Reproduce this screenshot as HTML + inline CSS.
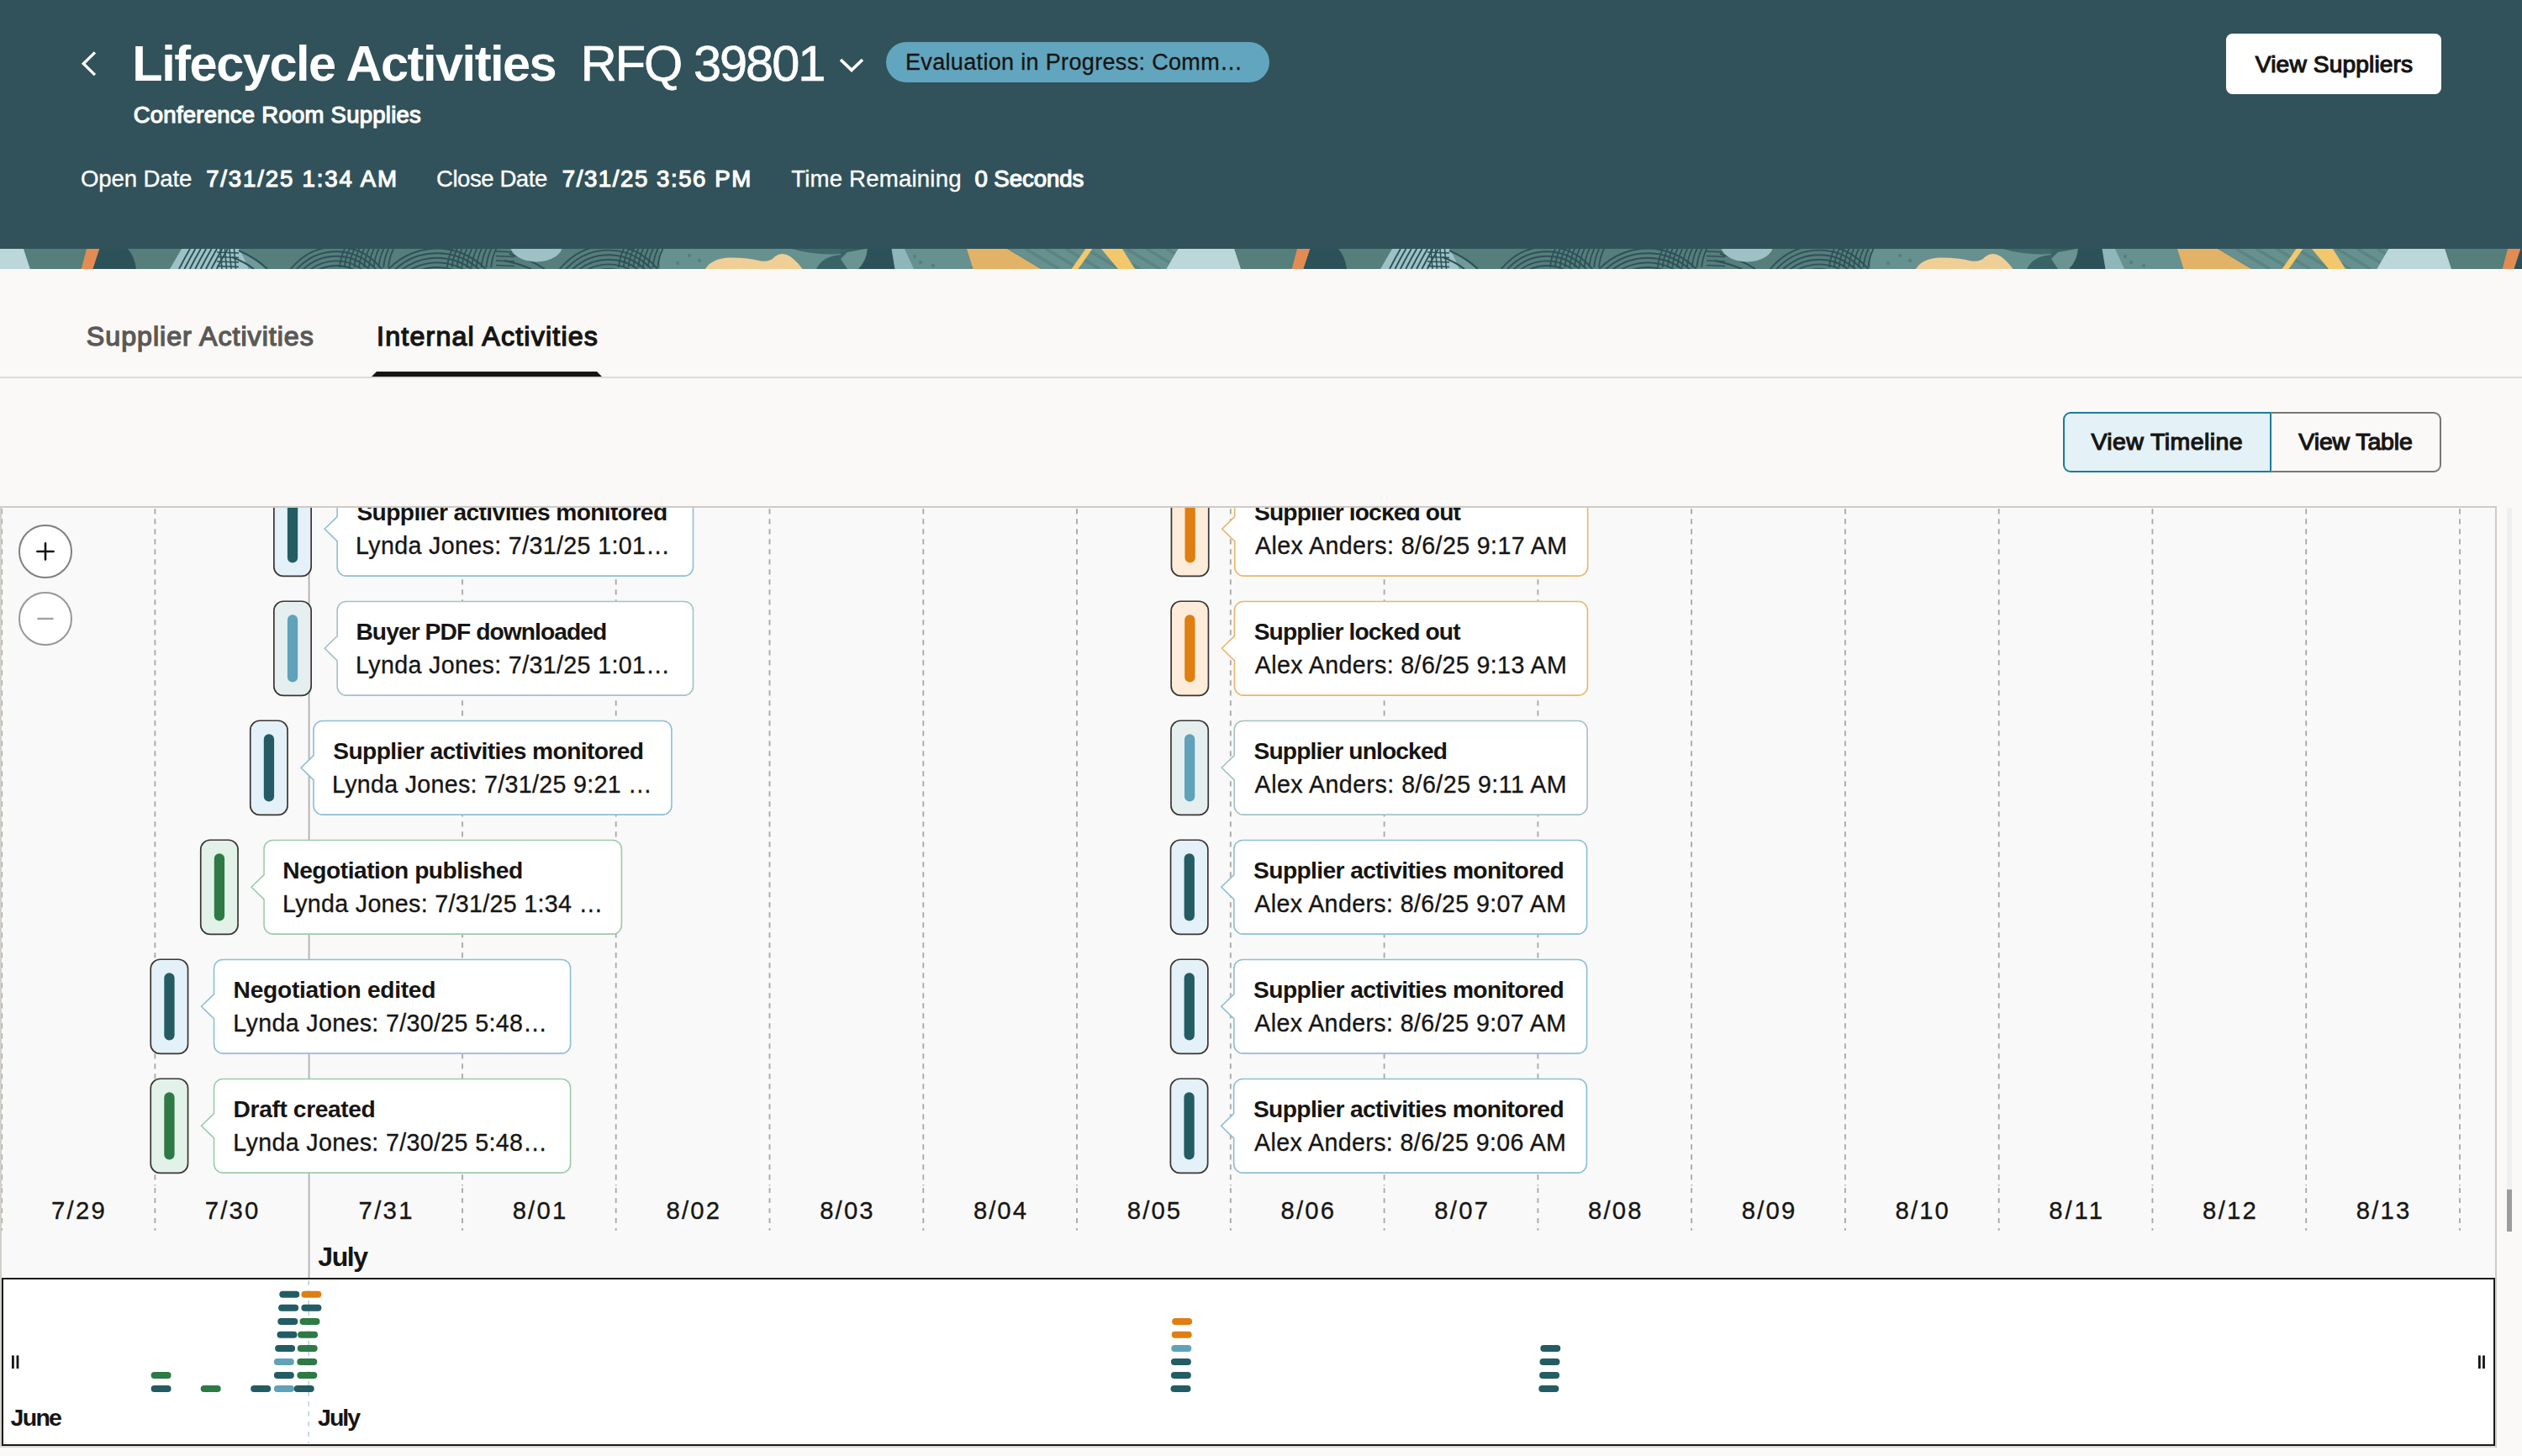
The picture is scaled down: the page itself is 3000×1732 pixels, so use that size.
<!DOCTYPE html>
<html lang="en"><head><meta charset="utf-8"><title>Lifecycle Activities</title>
<style>
html,body{margin:0;padding:0;}
body{width:3000px;height:1732px;overflow:hidden;background:#faf9f7;font-family:"Liberation Sans", sans-serif;}
#page{position:relative;width:3000px;height:1732px;overflow:hidden;background:#faf9f7;}
.t{position:absolute;white-space:nowrap;font-family:"Liberation Sans", sans-serif;}
.abs{position:absolute;}
#hdr{position:absolute;left:0;top:0;width:3000px;height:296px;background:#31525a;}
#strip{position:absolute;left:0;top:296px;width:3000px;height:24px;overflow:hidden;}
#tl{position:absolute;left:0;top:602px;width:2970px;height:1120px;background:#f9f9f9;overflow:hidden;}
</style></head><body><div id="page">

<header><div id="hdr"></div>
<svg class="abs" style="left:90px;top:56.4px" width="32" height="40" viewBox="0 0 32 40"><path d="M22.92 6.42 L9.25 19.8 L22.92 33.18" fill="none" stroke="#fff" stroke-width="3.3" stroke-linecap="butt" stroke-linejoin="miter"/></svg>
<span class="t" style="left:157.33px;top:46.03px;font-size:59.5px;line-height:59.5px;font-weight:700;color:#fff;letter-spacing:-1.483px;">Lifecycle Activities</span>
<span class="t" style="left:690.77px;top:46.03px;font-size:59.5px;line-height:59.5px;color:#fff;letter-spacing:-2.004px;-webkit-text-stroke:0.65px #fff;">RFQ 39801</span>
<svg class="abs" style="left:994px;top:64px" width="38" height="28" viewBox="0 0 38 28"><path d="M6 7.0 L19 19.4 L32 7.0" fill="none" stroke="#fff" stroke-width="3.6"/></svg>
<div class="abs" style="left:1054px;top:50px;width:456px;height:47.5px;border-radius:24px;background:#62a5be;"></div>
<span class="t" style="left:1076.99px;top:60.84px;font-size:27px;line-height:27px;color:#161513;letter-spacing:0.335px;-webkit-text-stroke:0.30px #161513;">Evaluation in Progress: Comm…</span>
<span class="t" style="left:158.70px;top:122.82px;font-size:27.5px;line-height:27.5px;color:#fff;letter-spacing:0.255px;-webkit-text-stroke:1.16px #fff;">Conference Room Supplies</span>
<span class="t" style="left:95.91px;top:198.74px;font-size:27.6px;line-height:27.6px;color:#fff;letter-spacing:-0.125px;-webkit-text-stroke:0.30px #fff;">Open Date</span>
<span class="t" style="left:245.20px;top:198.74px;font-size:27.6px;line-height:27.6px;color:#fff;letter-spacing:1.836px;-webkit-text-stroke:1.16px #fff;">7/31/25 1:34 AM</span>
<span class="t" style="left:518.97px;top:198.74px;font-size:27.6px;line-height:27.6px;color:#fff;letter-spacing:-0.467px;-webkit-text-stroke:0.30px #fff;">Close Date</span>
<span class="t" style="left:668.80px;top:198.74px;font-size:27.6px;line-height:27.6px;color:#fff;letter-spacing:1.563px;-webkit-text-stroke:1.16px #fff;">7/31/25 3:56 PM</span>
<span class="t" style="left:941.20px;top:198.74px;font-size:27.6px;line-height:27.6px;color:#fff;letter-spacing:0.191px;-webkit-text-stroke:0.30px #fff;">Time Remaining</span>
<span class="t" style="left:1159.48px;top:198.74px;font-size:27.6px;line-height:27.6px;color:#fff;letter-spacing:-0.062px;-webkit-text-stroke:1.16px #fff;">0 Seconds</span>
<div class="abs" style="left:2648px;top:40px;width:256px;height:72px;border-radius:7.5px;background:#fff;"></div>
<span class="t" style="left:2682.85px;top:61.83px;font-size:28.2px;line-height:28.2px;color:#161513;letter-spacing:0.105px;-webkit-text-stroke:1.18px #161513;">View Suppliers</span>
<div id="strip" aria-hidden="true"><svg width="3000" height="24" viewBox="0 0 3000 24" style="display:block"><rect width="3000" height="24" fill="#567e7b"/><g transform="translate(0,0)"><rect x="785" y="0" width="215" height="24" fill="#67918f"/><rect x="1000" y="0" width="30" height="24" fill="#6a9391"/><rect x="1070" y="0" width="330" height="24" fill="#67918f"/><path d="M1196 0 l40 24" stroke="#55807d" stroke-width="3.5" opacity=".7"/><path d="M1220 0 l40 24" stroke="#55807d" stroke-width="3.5" opacity=".7"/><path d="M1244 0 l40 24" stroke="#55807d" stroke-width="3.5" opacity=".7"/><path d="M1268 0 l40 24" stroke="#55807d" stroke-width="3.5" opacity=".7"/><path d="M1292 0 l40 24" stroke="#55807d" stroke-width="3.5" opacity=".7"/><path d="M1316 0 l40 24" stroke="#55807d" stroke-width="3.5" opacity=".7"/><path d="M1340 0 l40 24" stroke="#55807d" stroke-width="3.5" opacity=".7"/><path d="M1364 0 l40 24" stroke="#55807d" stroke-width="3.5" opacity=".7"/><path d="M1388 0 l40 24" stroke="#55807d" stroke-width="3.5" opacity=".7"/><circle cx="820" cy="8" r="2.2" fill="#55807d"/><circle cx="832" cy="14" r="2.2" fill="#55807d"/><circle cx="806" cy="17" r="2.2" fill="#55807d"/><circle cx="1095" cy="16" r="2.2" fill="#55807d"/><circle cx="1110" cy="20" r="2.2" fill="#55807d"/><circle cx="1088" cy="9" r="2.2" fill="#55807d"/><path d="M-38.5 0 L28 0 L35.8 24 L-52.4 24 Z" fill="#bcd7da"/><path d="M1401.5 0 L1468 0 L1475.8 24 L1387.6 24 Z" fill="#bcd7da"/><path d="M103 0 L118.4 0 L110.5 24 L96.7 24 Z" fill="#e28c54"/><path d="M110.5 24 L118.4 0 L152 0 Q160 9 162 24 Z" fill="#2d5158"/><path d="M216 0 L284 0 Q290 8 296 24 L202 24 Z" fill="#9dc1c4"/><path d="M284 0 Q300 10 316 24 L296 24 Q290 8 284 0 Z" fill="#6f9a99"/><path d="M226.0 0 Q219.0 12 213.0 24" stroke="#2d5158" stroke-width="1.9" fill="none"/><path d="M232.4 0 Q225.4 12 219.4 24" stroke="#2d5158" stroke-width="1.9" fill="none"/><path d="M238.8 0 Q231.8 12 225.8 24" stroke="#2d5158" stroke-width="1.9" fill="none"/><path d="M245.2 0 Q238.2 12 232.2 24" stroke="#2d5158" stroke-width="1.9" fill="none"/><path d="M251.6 0 Q244.6 12 238.6 24" stroke="#2d5158" stroke-width="1.9" fill="none"/><path d="M258.0 0 Q251.0 12 245.0 24" stroke="#2d5158" stroke-width="1.9" fill="none"/><path d="M264.4 0 Q257.4 12 251.39999999999998 24" stroke="#2d5158" stroke-width="1.9" fill="none"/><path d="M270.8 0 Q263.8 12 257.8 24" stroke="#2d5158" stroke-width="1.9" fill="none"/><path d="M262.0 0 L264.0 24" stroke="#2d5158" stroke-width="1.6" fill="none"/><path d="M267.5 0 L269.5 24" stroke="#2d5158" stroke-width="1.6" fill="none"/><path d="M273.0 0 L275.0 24" stroke="#2d5158" stroke-width="1.6" fill="none"/><path d="M278.5 0 L280.5 24" stroke="#2d5158" stroke-width="1.6" fill="none"/><path d="M258 4.0 L284 5.0" stroke="#2d5158" stroke-width="1.5" fill="none"/><path d="M258 9.5 L284 10.5" stroke="#2d5158" stroke-width="1.5" fill="none"/><path d="M258 15.0 L284 16.0" stroke="#2d5158" stroke-width="1.5" fill="none"/><path d="M258 20.5 L284 21.5" stroke="#2d5158" stroke-width="1.5" fill="none"/><path d="M284 2 Q306 12 318 24" stroke="#2d5158" stroke-width="2" fill="none"/><path d="M276 10 Q292 16 302 24" stroke="#2d5158" stroke-width="2" fill="none"/><circle cx="400" cy="66" r="46.0" stroke="#2d5158" stroke-width="1.9" fill="none"/><circle cx="400" cy="66" r="51.6" stroke="#2d5158" stroke-width="1.9" fill="none"/><circle cx="400" cy="66" r="57.2" stroke="#2d5158" stroke-width="1.9" fill="none"/><circle cx="400" cy="66" r="62.8" stroke="#2d5158" stroke-width="1.9" fill="none"/><circle cx="400" cy="66" r="68.4" stroke="#2d5158" stroke-width="1.9" fill="none"/><circle cx="520" cy="80" r="58.0" stroke="#2d5158" stroke-width="1.9" fill="none"/><circle cx="520" cy="80" r="63.6" stroke="#2d5158" stroke-width="1.9" fill="none"/><circle cx="520" cy="80" r="69.2" stroke="#2d5158" stroke-width="1.9" fill="none"/><circle cx="520" cy="80" r="74.8" stroke="#2d5158" stroke-width="1.9" fill="none"/><circle cx="520" cy="80" r="80.4" stroke="#2d5158" stroke-width="1.9" fill="none"/><circle cx="724" cy="70" r="46.0" stroke="#2d5158" stroke-width="1.9" fill="none"/><circle cx="724" cy="70" r="51.6" stroke="#2d5158" stroke-width="1.9" fill="none"/><circle cx="724" cy="70" r="57.2" stroke="#2d5158" stroke-width="1.9" fill="none"/><circle cx="724" cy="70" r="62.8" stroke="#2d5158" stroke-width="1.9" fill="none"/><circle cx="724" cy="70" r="68.4" stroke="#2d5158" stroke-width="1.9" fill="none"/><circle cx="724" cy="70" r="74.0" stroke="#2d5158" stroke-width="1.9" fill="none"/><path d="M410.0 0 Q405.0 10 404.0 22" stroke="#2d5158" stroke-width="1.8" fill="none"/><path d="M415.8 0 Q410.8 10 409.8 22" stroke="#2d5158" stroke-width="1.8" fill="none"/><path d="M421.6 0 Q416.6 10 415.6 22" stroke="#2d5158" stroke-width="1.8" fill="none"/><path d="M427.4 0 Q422.4 10 421.4 22" stroke="#2d5158" stroke-width="1.8" fill="none"/><path d="M433.2 0 Q428.2 10 427.2 22" stroke="#2d5158" stroke-width="1.8" fill="none"/><path d="M439.0 0 Q434.0 10 433.0 22" stroke="#2d5158" stroke-width="1.8" fill="none"/><path d="M444.8 0 Q439.8 10 438.8 22" stroke="#2d5158" stroke-width="1.8" fill="none"/><path d="M450.6 0 Q445.6 10 444.6 22" stroke="#2d5158" stroke-width="1.8" fill="none"/><path d="M456.4 0 Q451.4 10 450.4 22" stroke="#2d5158" stroke-width="1.8" fill="none"/><path d="M462.2 0 Q457.2 10 456.2 22" stroke="#2d5158" stroke-width="1.8" fill="none"/><path d="M468.0 0 Q463.0 10 462.0 22" stroke="#2d5158" stroke-width="1.8" fill="none"/><path d="M538.0 0 Q533.0 10 532.0 22" stroke="#2d5158" stroke-width="1.8" fill="none"/><path d="M543.8 0 Q538.8 10 537.8 22" stroke="#2d5158" stroke-width="1.8" fill="none"/><path d="M549.6 0 Q544.6 10 543.6 22" stroke="#2d5158" stroke-width="1.8" fill="none"/><path d="M555.4 0 Q550.4 10 549.4 22" stroke="#2d5158" stroke-width="1.8" fill="none"/><path d="M561.2 0 Q556.2 10 555.2 22" stroke="#2d5158" stroke-width="1.8" fill="none"/><path d="M567.0 0 Q562.0 10 561.0 22" stroke="#2d5158" stroke-width="1.8" fill="none"/><path d="M572.8 0 Q567.8 10 566.8 22" stroke="#2d5158" stroke-width="1.8" fill="none"/><path d="M578.6 0 Q573.6 10 572.6 22" stroke="#2d5158" stroke-width="1.8" fill="none"/><path d="M584.4 0 Q579.4 10 578.4 22" stroke="#2d5158" stroke-width="1.8" fill="none"/><path d="M590.2 0 Q585.2 10 584.2 22" stroke="#2d5158" stroke-width="1.8" fill="none"/><path d="M742.0 0 Q737.0 10 736.0 22" stroke="#2d5158" stroke-width="1.8" fill="none"/><path d="M747.8 0 Q742.8 10 741.8 22" stroke="#2d5158" stroke-width="1.8" fill="none"/><path d="M753.6 0 Q748.6 10 747.6 22" stroke="#2d5158" stroke-width="1.8" fill="none"/><path d="M759.4 0 Q754.4 10 753.4 22" stroke="#2d5158" stroke-width="1.8" fill="none"/><path d="M765.2 0 Q760.2 10 759.2 22" stroke="#2d5158" stroke-width="1.8" fill="none"/><path d="M771.0 0 Q766.0 10 765.0 22" stroke="#2d5158" stroke-width="1.8" fill="none"/><path d="M776.8 0 Q771.8 10 770.8 22" stroke="#2d5158" stroke-width="1.8" fill="none"/><path d="M782.6 0 Q777.6 10 776.6 22" stroke="#2d5158" stroke-width="1.8" fill="none"/><path d="M788.4 0 Q783.4 10 782.4 22" stroke="#2d5158" stroke-width="1.8" fill="none"/><path d="M590 3.0 L612 4.0" stroke="#2d5158" stroke-width="1.5" fill="none"/><path d="M590 8.5 L612 9.5" stroke="#2d5158" stroke-width="1.5" fill="none"/><path d="M590 14.0 L612 15.0" stroke="#2d5158" stroke-width="1.5" fill="none"/><path d="M590 19.5 L612 20.5" stroke="#2d5158" stroke-width="1.5" fill="none"/><path d="M606 6 Q630 12 648 24" stroke="#2d5158" stroke-width="2" fill="none"/><path d="M600 14 Q618 18 632 24" stroke="#2d5158" stroke-width="2" fill="none"/><ellipse cx="638" cy="-4" rx="31" ry="19.5" fill="#9dc1c4"/><path d="M942 0 L1000 0 L1000 6 Q970 8 942 0 Z" fill="#41696b"/><path d="M839 24 Q846 12 866 10.5 Q888 10 905 14.5 Q916 16 922 9 Q930 3 940 9 Q950 17 954.5 24 Z" fill="#f0cf97"/><path d="M971 24 Q978 9 1000 7 L1000 0 L1032 0 Q1030 14 1022 24 Z" fill="#3a6367"/><path d="M1000 12 L1008 4 L1030 0 L1032 0 Q1030 14 1022 24 L1008 24 Z" fill="#6a9391"/><path d="M1032 0 L1061 0 L1064.5 24 L1021 24 Q1031 14 1032 0 Z" fill="#2d5158"/><path d="M1060.5 0 L1076 0 L1087 24 L1064.5 24 Z" fill="#8fb6b8"/><path d="M1150 0 L1198 0 L1238 24 L1157.6 24 Z" fill="#e2b266"/><path d="M1291.4 0 L1299.4 0 L1282.5 24 L1274.6 24 Z" fill="#f3c86c"/><path d="M1310 0 L1335 0 L1350 24 L1330 24 Z" fill="#f3c86c"/></g><g transform="translate(1440,0)"><rect x="785" y="0" width="215" height="24" fill="#67918f"/><rect x="1000" y="0" width="30" height="24" fill="#6a9391"/><rect x="1070" y="0" width="330" height="24" fill="#67918f"/><path d="M1196 0 l40 24" stroke="#55807d" stroke-width="3.5" opacity=".7"/><path d="M1220 0 l40 24" stroke="#55807d" stroke-width="3.5" opacity=".7"/><path d="M1244 0 l40 24" stroke="#55807d" stroke-width="3.5" opacity=".7"/><path d="M1268 0 l40 24" stroke="#55807d" stroke-width="3.5" opacity=".7"/><path d="M1292 0 l40 24" stroke="#55807d" stroke-width="3.5" opacity=".7"/><path d="M1316 0 l40 24" stroke="#55807d" stroke-width="3.5" opacity=".7"/><path d="M1340 0 l40 24" stroke="#55807d" stroke-width="3.5" opacity=".7"/><path d="M1364 0 l40 24" stroke="#55807d" stroke-width="3.5" opacity=".7"/><path d="M1388 0 l40 24" stroke="#55807d" stroke-width="3.5" opacity=".7"/><circle cx="820" cy="8" r="2.2" fill="#55807d"/><circle cx="832" cy="14" r="2.2" fill="#55807d"/><circle cx="806" cy="17" r="2.2" fill="#55807d"/><circle cx="1095" cy="16" r="2.2" fill="#55807d"/><circle cx="1110" cy="20" r="2.2" fill="#55807d"/><circle cx="1088" cy="9" r="2.2" fill="#55807d"/><path d="M-38.5 0 L28 0 L35.8 24 L-52.4 24 Z" fill="#bcd7da"/><path d="M1401.5 0 L1468 0 L1475.8 24 L1387.6 24 Z" fill="#bcd7da"/><path d="M103 0 L118.4 0 L110.5 24 L96.7 24 Z" fill="#e28c54"/><path d="M110.5 24 L118.4 0 L152 0 Q160 9 162 24 Z" fill="#2d5158"/><path d="M216 0 L284 0 Q290 8 296 24 L202 24 Z" fill="#9dc1c4"/><path d="M284 0 Q300 10 316 24 L296 24 Q290 8 284 0 Z" fill="#6f9a99"/><path d="M226.0 0 Q219.0 12 213.0 24" stroke="#2d5158" stroke-width="1.9" fill="none"/><path d="M232.4 0 Q225.4 12 219.4 24" stroke="#2d5158" stroke-width="1.9" fill="none"/><path d="M238.8 0 Q231.8 12 225.8 24" stroke="#2d5158" stroke-width="1.9" fill="none"/><path d="M245.2 0 Q238.2 12 232.2 24" stroke="#2d5158" stroke-width="1.9" fill="none"/><path d="M251.6 0 Q244.6 12 238.6 24" stroke="#2d5158" stroke-width="1.9" fill="none"/><path d="M258.0 0 Q251.0 12 245.0 24" stroke="#2d5158" stroke-width="1.9" fill="none"/><path d="M264.4 0 Q257.4 12 251.39999999999998 24" stroke="#2d5158" stroke-width="1.9" fill="none"/><path d="M270.8 0 Q263.8 12 257.8 24" stroke="#2d5158" stroke-width="1.9" fill="none"/><path d="M262.0 0 L264.0 24" stroke="#2d5158" stroke-width="1.6" fill="none"/><path d="M267.5 0 L269.5 24" stroke="#2d5158" stroke-width="1.6" fill="none"/><path d="M273.0 0 L275.0 24" stroke="#2d5158" stroke-width="1.6" fill="none"/><path d="M278.5 0 L280.5 24" stroke="#2d5158" stroke-width="1.6" fill="none"/><path d="M258 4.0 L284 5.0" stroke="#2d5158" stroke-width="1.5" fill="none"/><path d="M258 9.5 L284 10.5" stroke="#2d5158" stroke-width="1.5" fill="none"/><path d="M258 15.0 L284 16.0" stroke="#2d5158" stroke-width="1.5" fill="none"/><path d="M258 20.5 L284 21.5" stroke="#2d5158" stroke-width="1.5" fill="none"/><path d="M284 2 Q306 12 318 24" stroke="#2d5158" stroke-width="2" fill="none"/><path d="M276 10 Q292 16 302 24" stroke="#2d5158" stroke-width="2" fill="none"/><circle cx="400" cy="66" r="46.0" stroke="#2d5158" stroke-width="1.9" fill="none"/><circle cx="400" cy="66" r="51.6" stroke="#2d5158" stroke-width="1.9" fill="none"/><circle cx="400" cy="66" r="57.2" stroke="#2d5158" stroke-width="1.9" fill="none"/><circle cx="400" cy="66" r="62.8" stroke="#2d5158" stroke-width="1.9" fill="none"/><circle cx="400" cy="66" r="68.4" stroke="#2d5158" stroke-width="1.9" fill="none"/><circle cx="520" cy="80" r="58.0" stroke="#2d5158" stroke-width="1.9" fill="none"/><circle cx="520" cy="80" r="63.6" stroke="#2d5158" stroke-width="1.9" fill="none"/><circle cx="520" cy="80" r="69.2" stroke="#2d5158" stroke-width="1.9" fill="none"/><circle cx="520" cy="80" r="74.8" stroke="#2d5158" stroke-width="1.9" fill="none"/><circle cx="520" cy="80" r="80.4" stroke="#2d5158" stroke-width="1.9" fill="none"/><circle cx="724" cy="70" r="46.0" stroke="#2d5158" stroke-width="1.9" fill="none"/><circle cx="724" cy="70" r="51.6" stroke="#2d5158" stroke-width="1.9" fill="none"/><circle cx="724" cy="70" r="57.2" stroke="#2d5158" stroke-width="1.9" fill="none"/><circle cx="724" cy="70" r="62.8" stroke="#2d5158" stroke-width="1.9" fill="none"/><circle cx="724" cy="70" r="68.4" stroke="#2d5158" stroke-width="1.9" fill="none"/><circle cx="724" cy="70" r="74.0" stroke="#2d5158" stroke-width="1.9" fill="none"/><path d="M410.0 0 Q405.0 10 404.0 22" stroke="#2d5158" stroke-width="1.8" fill="none"/><path d="M415.8 0 Q410.8 10 409.8 22" stroke="#2d5158" stroke-width="1.8" fill="none"/><path d="M421.6 0 Q416.6 10 415.6 22" stroke="#2d5158" stroke-width="1.8" fill="none"/><path d="M427.4 0 Q422.4 10 421.4 22" stroke="#2d5158" stroke-width="1.8" fill="none"/><path d="M433.2 0 Q428.2 10 427.2 22" stroke="#2d5158" stroke-width="1.8" fill="none"/><path d="M439.0 0 Q434.0 10 433.0 22" stroke="#2d5158" stroke-width="1.8" fill="none"/><path d="M444.8 0 Q439.8 10 438.8 22" stroke="#2d5158" stroke-width="1.8" fill="none"/><path d="M450.6 0 Q445.6 10 444.6 22" stroke="#2d5158" stroke-width="1.8" fill="none"/><path d="M456.4 0 Q451.4 10 450.4 22" stroke="#2d5158" stroke-width="1.8" fill="none"/><path d="M462.2 0 Q457.2 10 456.2 22" stroke="#2d5158" stroke-width="1.8" fill="none"/><path d="M468.0 0 Q463.0 10 462.0 22" stroke="#2d5158" stroke-width="1.8" fill="none"/><path d="M538.0 0 Q533.0 10 532.0 22" stroke="#2d5158" stroke-width="1.8" fill="none"/><path d="M543.8 0 Q538.8 10 537.8 22" stroke="#2d5158" stroke-width="1.8" fill="none"/><path d="M549.6 0 Q544.6 10 543.6 22" stroke="#2d5158" stroke-width="1.8" fill="none"/><path d="M555.4 0 Q550.4 10 549.4 22" stroke="#2d5158" stroke-width="1.8" fill="none"/><path d="M561.2 0 Q556.2 10 555.2 22" stroke="#2d5158" stroke-width="1.8" fill="none"/><path d="M567.0 0 Q562.0 10 561.0 22" stroke="#2d5158" stroke-width="1.8" fill="none"/><path d="M572.8 0 Q567.8 10 566.8 22" stroke="#2d5158" stroke-width="1.8" fill="none"/><path d="M578.6 0 Q573.6 10 572.6 22" stroke="#2d5158" stroke-width="1.8" fill="none"/><path d="M584.4 0 Q579.4 10 578.4 22" stroke="#2d5158" stroke-width="1.8" fill="none"/><path d="M590.2 0 Q585.2 10 584.2 22" stroke="#2d5158" stroke-width="1.8" fill="none"/><path d="M742.0 0 Q737.0 10 736.0 22" stroke="#2d5158" stroke-width="1.8" fill="none"/><path d="M747.8 0 Q742.8 10 741.8 22" stroke="#2d5158" stroke-width="1.8" fill="none"/><path d="M753.6 0 Q748.6 10 747.6 22" stroke="#2d5158" stroke-width="1.8" fill="none"/><path d="M759.4 0 Q754.4 10 753.4 22" stroke="#2d5158" stroke-width="1.8" fill="none"/><path d="M765.2 0 Q760.2 10 759.2 22" stroke="#2d5158" stroke-width="1.8" fill="none"/><path d="M771.0 0 Q766.0 10 765.0 22" stroke="#2d5158" stroke-width="1.8" fill="none"/><path d="M776.8 0 Q771.8 10 770.8 22" stroke="#2d5158" stroke-width="1.8" fill="none"/><path d="M782.6 0 Q777.6 10 776.6 22" stroke="#2d5158" stroke-width="1.8" fill="none"/><path d="M788.4 0 Q783.4 10 782.4 22" stroke="#2d5158" stroke-width="1.8" fill="none"/><path d="M590 3.0 L612 4.0" stroke="#2d5158" stroke-width="1.5" fill="none"/><path d="M590 8.5 L612 9.5" stroke="#2d5158" stroke-width="1.5" fill="none"/><path d="M590 14.0 L612 15.0" stroke="#2d5158" stroke-width="1.5" fill="none"/><path d="M590 19.5 L612 20.5" stroke="#2d5158" stroke-width="1.5" fill="none"/><path d="M606 6 Q630 12 648 24" stroke="#2d5158" stroke-width="2" fill="none"/><path d="M600 14 Q618 18 632 24" stroke="#2d5158" stroke-width="2" fill="none"/><ellipse cx="638" cy="-4" rx="31" ry="19.5" fill="#9dc1c4"/><path d="M942 0 L1000 0 L1000 6 Q970 8 942 0 Z" fill="#41696b"/><path d="M839 24 Q846 12 866 10.5 Q888 10 905 14.5 Q916 16 922 9 Q930 3 940 9 Q950 17 954.5 24 Z" fill="#f0cf97"/><path d="M971 24 Q978 9 1000 7 L1000 0 L1032 0 Q1030 14 1022 24 Z" fill="#3a6367"/><path d="M1000 12 L1008 4 L1030 0 L1032 0 Q1030 14 1022 24 L1008 24 Z" fill="#6a9391"/><path d="M1032 0 L1061 0 L1064.5 24 L1021 24 Q1031 14 1032 0 Z" fill="#2d5158"/><path d="M1060.5 0 L1076 0 L1087 24 L1064.5 24 Z" fill="#8fb6b8"/><path d="M1150 0 L1198 0 L1238 24 L1157.6 24 Z" fill="#e2b266"/><path d="M1291.4 0 L1299.4 0 L1282.5 24 L1274.6 24 Z" fill="#f3c86c"/><path d="M1310 0 L1335 0 L1350 24 L1330 24 Z" fill="#f3c86c"/></g><g transform="translate(2880,0)"><rect x="785" y="0" width="215" height="24" fill="#67918f"/><rect x="1000" y="0" width="30" height="24" fill="#6a9391"/><rect x="1070" y="0" width="330" height="24" fill="#67918f"/><path d="M1196 0 l40 24" stroke="#55807d" stroke-width="3.5" opacity=".7"/><path d="M1220 0 l40 24" stroke="#55807d" stroke-width="3.5" opacity=".7"/><path d="M1244 0 l40 24" stroke="#55807d" stroke-width="3.5" opacity=".7"/><path d="M1268 0 l40 24" stroke="#55807d" stroke-width="3.5" opacity=".7"/><path d="M1292 0 l40 24" stroke="#55807d" stroke-width="3.5" opacity=".7"/><path d="M1316 0 l40 24" stroke="#55807d" stroke-width="3.5" opacity=".7"/><path d="M1340 0 l40 24" stroke="#55807d" stroke-width="3.5" opacity=".7"/><path d="M1364 0 l40 24" stroke="#55807d" stroke-width="3.5" opacity=".7"/><path d="M1388 0 l40 24" stroke="#55807d" stroke-width="3.5" opacity=".7"/><circle cx="820" cy="8" r="2.2" fill="#55807d"/><circle cx="832" cy="14" r="2.2" fill="#55807d"/><circle cx="806" cy="17" r="2.2" fill="#55807d"/><circle cx="1095" cy="16" r="2.2" fill="#55807d"/><circle cx="1110" cy="20" r="2.2" fill="#55807d"/><circle cx="1088" cy="9" r="2.2" fill="#55807d"/><path d="M-38.5 0 L28 0 L35.8 24 L-52.4 24 Z" fill="#bcd7da"/><path d="M1401.5 0 L1468 0 L1475.8 24 L1387.6 24 Z" fill="#bcd7da"/><path d="M103 0 L118.4 0 L110.5 24 L96.7 24 Z" fill="#e28c54"/><path d="M110.5 24 L118.4 0 L152 0 Q160 9 162 24 Z" fill="#2d5158"/><path d="M216 0 L284 0 Q290 8 296 24 L202 24 Z" fill="#9dc1c4"/><path d="M284 0 Q300 10 316 24 L296 24 Q290 8 284 0 Z" fill="#6f9a99"/><path d="M226.0 0 Q219.0 12 213.0 24" stroke="#2d5158" stroke-width="1.9" fill="none"/><path d="M232.4 0 Q225.4 12 219.4 24" stroke="#2d5158" stroke-width="1.9" fill="none"/><path d="M238.8 0 Q231.8 12 225.8 24" stroke="#2d5158" stroke-width="1.9" fill="none"/><path d="M245.2 0 Q238.2 12 232.2 24" stroke="#2d5158" stroke-width="1.9" fill="none"/><path d="M251.6 0 Q244.6 12 238.6 24" stroke="#2d5158" stroke-width="1.9" fill="none"/><path d="M258.0 0 Q251.0 12 245.0 24" stroke="#2d5158" stroke-width="1.9" fill="none"/><path d="M264.4 0 Q257.4 12 251.39999999999998 24" stroke="#2d5158" stroke-width="1.9" fill="none"/><path d="M270.8 0 Q263.8 12 257.8 24" stroke="#2d5158" stroke-width="1.9" fill="none"/><path d="M262.0 0 L264.0 24" stroke="#2d5158" stroke-width="1.6" fill="none"/><path d="M267.5 0 L269.5 24" stroke="#2d5158" stroke-width="1.6" fill="none"/><path d="M273.0 0 L275.0 24" stroke="#2d5158" stroke-width="1.6" fill="none"/><path d="M278.5 0 L280.5 24" stroke="#2d5158" stroke-width="1.6" fill="none"/><path d="M258 4.0 L284 5.0" stroke="#2d5158" stroke-width="1.5" fill="none"/><path d="M258 9.5 L284 10.5" stroke="#2d5158" stroke-width="1.5" fill="none"/><path d="M258 15.0 L284 16.0" stroke="#2d5158" stroke-width="1.5" fill="none"/><path d="M258 20.5 L284 21.5" stroke="#2d5158" stroke-width="1.5" fill="none"/><path d="M284 2 Q306 12 318 24" stroke="#2d5158" stroke-width="2" fill="none"/><path d="M276 10 Q292 16 302 24" stroke="#2d5158" stroke-width="2" fill="none"/><circle cx="400" cy="66" r="46.0" stroke="#2d5158" stroke-width="1.9" fill="none"/><circle cx="400" cy="66" r="51.6" stroke="#2d5158" stroke-width="1.9" fill="none"/><circle cx="400" cy="66" r="57.2" stroke="#2d5158" stroke-width="1.9" fill="none"/><circle cx="400" cy="66" r="62.8" stroke="#2d5158" stroke-width="1.9" fill="none"/><circle cx="400" cy="66" r="68.4" stroke="#2d5158" stroke-width="1.9" fill="none"/><circle cx="520" cy="80" r="58.0" stroke="#2d5158" stroke-width="1.9" fill="none"/><circle cx="520" cy="80" r="63.6" stroke="#2d5158" stroke-width="1.9" fill="none"/><circle cx="520" cy="80" r="69.2" stroke="#2d5158" stroke-width="1.9" fill="none"/><circle cx="520" cy="80" r="74.8" stroke="#2d5158" stroke-width="1.9" fill="none"/><circle cx="520" cy="80" r="80.4" stroke="#2d5158" stroke-width="1.9" fill="none"/><circle cx="724" cy="70" r="46.0" stroke="#2d5158" stroke-width="1.9" fill="none"/><circle cx="724" cy="70" r="51.6" stroke="#2d5158" stroke-width="1.9" fill="none"/><circle cx="724" cy="70" r="57.2" stroke="#2d5158" stroke-width="1.9" fill="none"/><circle cx="724" cy="70" r="62.8" stroke="#2d5158" stroke-width="1.9" fill="none"/><circle cx="724" cy="70" r="68.4" stroke="#2d5158" stroke-width="1.9" fill="none"/><circle cx="724" cy="70" r="74.0" stroke="#2d5158" stroke-width="1.9" fill="none"/><path d="M410.0 0 Q405.0 10 404.0 22" stroke="#2d5158" stroke-width="1.8" fill="none"/><path d="M415.8 0 Q410.8 10 409.8 22" stroke="#2d5158" stroke-width="1.8" fill="none"/><path d="M421.6 0 Q416.6 10 415.6 22" stroke="#2d5158" stroke-width="1.8" fill="none"/><path d="M427.4 0 Q422.4 10 421.4 22" stroke="#2d5158" stroke-width="1.8" fill="none"/><path d="M433.2 0 Q428.2 10 427.2 22" stroke="#2d5158" stroke-width="1.8" fill="none"/><path d="M439.0 0 Q434.0 10 433.0 22" stroke="#2d5158" stroke-width="1.8" fill="none"/><path d="M444.8 0 Q439.8 10 438.8 22" stroke="#2d5158" stroke-width="1.8" fill="none"/><path d="M450.6 0 Q445.6 10 444.6 22" stroke="#2d5158" stroke-width="1.8" fill="none"/><path d="M456.4 0 Q451.4 10 450.4 22" stroke="#2d5158" stroke-width="1.8" fill="none"/><path d="M462.2 0 Q457.2 10 456.2 22" stroke="#2d5158" stroke-width="1.8" fill="none"/><path d="M468.0 0 Q463.0 10 462.0 22" stroke="#2d5158" stroke-width="1.8" fill="none"/><path d="M538.0 0 Q533.0 10 532.0 22" stroke="#2d5158" stroke-width="1.8" fill="none"/><path d="M543.8 0 Q538.8 10 537.8 22" stroke="#2d5158" stroke-width="1.8" fill="none"/><path d="M549.6 0 Q544.6 10 543.6 22" stroke="#2d5158" stroke-width="1.8" fill="none"/><path d="M555.4 0 Q550.4 10 549.4 22" stroke="#2d5158" stroke-width="1.8" fill="none"/><path d="M561.2 0 Q556.2 10 555.2 22" stroke="#2d5158" stroke-width="1.8" fill="none"/><path d="M567.0 0 Q562.0 10 561.0 22" stroke="#2d5158" stroke-width="1.8" fill="none"/><path d="M572.8 0 Q567.8 10 566.8 22" stroke="#2d5158" stroke-width="1.8" fill="none"/><path d="M578.6 0 Q573.6 10 572.6 22" stroke="#2d5158" stroke-width="1.8" fill="none"/><path d="M584.4 0 Q579.4 10 578.4 22" stroke="#2d5158" stroke-width="1.8" fill="none"/><path d="M590.2 0 Q585.2 10 584.2 22" stroke="#2d5158" stroke-width="1.8" fill="none"/><path d="M742.0 0 Q737.0 10 736.0 22" stroke="#2d5158" stroke-width="1.8" fill="none"/><path d="M747.8 0 Q742.8 10 741.8 22" stroke="#2d5158" stroke-width="1.8" fill="none"/><path d="M753.6 0 Q748.6 10 747.6 22" stroke="#2d5158" stroke-width="1.8" fill="none"/><path d="M759.4 0 Q754.4 10 753.4 22" stroke="#2d5158" stroke-width="1.8" fill="none"/><path d="M765.2 0 Q760.2 10 759.2 22" stroke="#2d5158" stroke-width="1.8" fill="none"/><path d="M771.0 0 Q766.0 10 765.0 22" stroke="#2d5158" stroke-width="1.8" fill="none"/><path d="M776.8 0 Q771.8 10 770.8 22" stroke="#2d5158" stroke-width="1.8" fill="none"/><path d="M782.6 0 Q777.6 10 776.6 22" stroke="#2d5158" stroke-width="1.8" fill="none"/><path d="M788.4 0 Q783.4 10 782.4 22" stroke="#2d5158" stroke-width="1.8" fill="none"/><path d="M590 3.0 L612 4.0" stroke="#2d5158" stroke-width="1.5" fill="none"/><path d="M590 8.5 L612 9.5" stroke="#2d5158" stroke-width="1.5" fill="none"/><path d="M590 14.0 L612 15.0" stroke="#2d5158" stroke-width="1.5" fill="none"/><path d="M590 19.5 L612 20.5" stroke="#2d5158" stroke-width="1.5" fill="none"/><path d="M606 6 Q630 12 648 24" stroke="#2d5158" stroke-width="2" fill="none"/><path d="M600 14 Q618 18 632 24" stroke="#2d5158" stroke-width="2" fill="none"/><ellipse cx="638" cy="-4" rx="31" ry="19.5" fill="#9dc1c4"/><path d="M942 0 L1000 0 L1000 6 Q970 8 942 0 Z" fill="#41696b"/><path d="M839 24 Q846 12 866 10.5 Q888 10 905 14.5 Q916 16 922 9 Q930 3 940 9 Q950 17 954.5 24 Z" fill="#f0cf97"/><path d="M971 24 Q978 9 1000 7 L1000 0 L1032 0 Q1030 14 1022 24 Z" fill="#3a6367"/><path d="M1000 12 L1008 4 L1030 0 L1032 0 Q1030 14 1022 24 L1008 24 Z" fill="#6a9391"/><path d="M1032 0 L1061 0 L1064.5 24 L1021 24 Q1031 14 1032 0 Z" fill="#2d5158"/><path d="M1060.5 0 L1076 0 L1087 24 L1064.5 24 Z" fill="#8fb6b8"/><path d="M1150 0 L1198 0 L1238 24 L1157.6 24 Z" fill="#e2b266"/><path d="M1291.4 0 L1299.4 0 L1282.5 24 L1274.6 24 Z" fill="#f3c86c"/><path d="M1310 0 L1335 0 L1350 24 L1330 24 Z" fill="#f3c86c"/></g></svg></div></header>
<nav role="tablist">
<span class="t" style="left:102.83px;top:383.74px;font-size:32.2px;line-height:32.2px;color:#5b5956;letter-spacing:0.985px;-webkit-text-stroke:1.35px #5b5956;">Supplier Activities</span>
<span class="t" style="left:448.08px;top:383.74px;font-size:32.2px;line-height:32.2px;color:#161513;letter-spacing:1.184px;-webkit-text-stroke:1.35px #161513;">Internal Activities</span>
<div class="abs" style="left:0;top:448px;width:3000px;height:2px;background:#dddbd7;"></div>
<svg class="abs" style="left:442px;top:442px" width="275" height="6" viewBox="0 0 275 6"><path d="M0 6 L6 0 L268 0 L274 6 Z" fill="#161513"/></svg>
</nav>
<div role="group" class="toggle">
<div class="abs" style="left:2454px;top:490px;width:248px;height:72px;box-sizing:border-box;border:2px solid #1b7aa0;border-radius:9px 0 0 9px;background:#e4f1f7;"></div>
<div class="abs" style="left:2700px;top:490px;width:204px;height:72px;box-sizing:border-box;border:2px solid #7a7773;border-left:2px solid #1b7aa0;border-radius:0 9px 9px 0;background:#faf9f7;"></div>
<span class="t" style="left:2487.46px;top:511.47px;font-size:28.5px;line-height:28.5px;color:#161513;letter-spacing:0.401px;-webkit-text-stroke:1.20px #161513;">View Timeline</span>
<span class="t" style="left:2734.36px;top:511.47px;font-size:28.5px;line-height:28.5px;color:#161513;letter-spacing:-0.146px;-webkit-text-stroke:1.20px #161513;">View Table</span>
</div>
<main id="tl">
<div class="abs" style="left:0;top:0;width:2970px;height:2.4px;background:#cfcac5;z-index:5"></div><div class="abs" style="left:0;top:0;width:2px;height:1120px;background:#d3cfcb"></div><div class="abs" style="left:0;top:1118px;width:2970px;height:2px;background:#dcd9d6"></div><div class="abs" style="left:2968px;top:0;width:2px;height:1121px;background:#cfcac5"></div>
<svg class="abs" style="left:0;top:0" width="2969" height="1121" viewBox="0 0 2969 1121"><line x1="2.5" y1="3.2" x2="2.5" y2="808.5" stroke="#a9a7a5" stroke-width="1.1" stroke-dasharray="6.2 5.8"/><line x1="2.5" y1="811.3" x2="2.5" y2="861.8" stroke="#a9a7a5" stroke-width="1.1" stroke-dasharray="5.8 6.13"/><line x1="184.4" y1="3.2" x2="184.4" y2="808.5" stroke="#a9a7a5" stroke-width="1.8" stroke-dasharray="6.2 5.8"/><line x1="184.4" y1="811.3" x2="184.4" y2="861.8" stroke="#a9a7a5" stroke-width="1.8" stroke-dasharray="5.8 6.13"/><line x1="367.6" y1="0" x2="367.6" y2="918.5" stroke="#b1b0ae" stroke-width="1.8"/><line x1="550.0" y1="3.2" x2="550.0" y2="808.5" stroke="#a9a7a5" stroke-width="1.8" stroke-dasharray="6.2 5.8"/><line x1="550.0" y1="811.3" x2="550.0" y2="861.8" stroke="#a9a7a5" stroke-width="1.8" stroke-dasharray="5.8 6.13"/><line x1="732.7" y1="3.2" x2="732.7" y2="808.5" stroke="#a9a7a5" stroke-width="1.8" stroke-dasharray="6.2 5.8"/><line x1="732.7" y1="811.3" x2="732.7" y2="861.8" stroke="#a9a7a5" stroke-width="1.8" stroke-dasharray="5.8 6.13"/><line x1="915.5" y1="3.2" x2="915.5" y2="808.5" stroke="#a9a7a5" stroke-width="1.8" stroke-dasharray="6.2 5.8"/><line x1="915.5" y1="811.3" x2="915.5" y2="861.8" stroke="#a9a7a5" stroke-width="1.8" stroke-dasharray="5.8 6.13"/><line x1="1098.3" y1="3.2" x2="1098.3" y2="808.5" stroke="#a9a7a5" stroke-width="1.8" stroke-dasharray="6.2 5.8"/><line x1="1098.3" y1="811.3" x2="1098.3" y2="861.8" stroke="#a9a7a5" stroke-width="1.8" stroke-dasharray="5.8 6.13"/><line x1="1281.0" y1="3.2" x2="1281.0" y2="808.5" stroke="#a9a7a5" stroke-width="1.8" stroke-dasharray="6.2 5.8"/><line x1="1281.0" y1="811.3" x2="1281.0" y2="861.8" stroke="#a9a7a5" stroke-width="1.8" stroke-dasharray="5.8 6.13"/><line x1="1463.8" y1="3.2" x2="1463.8" y2="808.5" stroke="#a9a7a5" stroke-width="1.8" stroke-dasharray="6.2 5.8"/><line x1="1463.8" y1="811.3" x2="1463.8" y2="861.8" stroke="#a9a7a5" stroke-width="1.8" stroke-dasharray="5.8 6.13"/><line x1="1646.6" y1="3.2" x2="1646.6" y2="808.5" stroke="#a9a7a5" stroke-width="1.8" stroke-dasharray="6.2 5.8"/><line x1="1646.6" y1="811.3" x2="1646.6" y2="861.8" stroke="#a9a7a5" stroke-width="1.8" stroke-dasharray="5.8 6.13"/><line x1="1829.4" y1="3.2" x2="1829.4" y2="808.5" stroke="#a9a7a5" stroke-width="1.8" stroke-dasharray="6.2 5.8"/><line x1="1829.4" y1="811.3" x2="1829.4" y2="861.8" stroke="#a9a7a5" stroke-width="1.8" stroke-dasharray="5.8 6.13"/><line x1="2012.1" y1="3.2" x2="2012.1" y2="808.5" stroke="#a9a7a5" stroke-width="1.8" stroke-dasharray="6.2 5.8"/><line x1="2012.1" y1="811.3" x2="2012.1" y2="861.8" stroke="#a9a7a5" stroke-width="1.8" stroke-dasharray="5.8 6.13"/><line x1="2194.9" y1="3.2" x2="2194.9" y2="808.5" stroke="#a9a7a5" stroke-width="1.8" stroke-dasharray="6.2 5.8"/><line x1="2194.9" y1="811.3" x2="2194.9" y2="861.8" stroke="#a9a7a5" stroke-width="1.8" stroke-dasharray="5.8 6.13"/><line x1="2377.7" y1="3.2" x2="2377.7" y2="808.5" stroke="#a9a7a5" stroke-width="1.8" stroke-dasharray="6.2 5.8"/><line x1="2377.7" y1="811.3" x2="2377.7" y2="861.8" stroke="#a9a7a5" stroke-width="1.8" stroke-dasharray="5.8 6.13"/><line x1="2560.4" y1="3.2" x2="2560.4" y2="808.5" stroke="#a9a7a5" stroke-width="1.8" stroke-dasharray="6.2 5.8"/><line x1="2560.4" y1="811.3" x2="2560.4" y2="861.8" stroke="#a9a7a5" stroke-width="1.8" stroke-dasharray="5.8 6.13"/><line x1="2743.2" y1="3.2" x2="2743.2" y2="808.5" stroke="#a9a7a5" stroke-width="1.8" stroke-dasharray="6.2 5.8"/><line x1="2743.2" y1="811.3" x2="2743.2" y2="861.8" stroke="#a9a7a5" stroke-width="1.8" stroke-dasharray="5.8 6.13"/><line x1="2926.0" y1="3.2" x2="2926.0" y2="808.5" stroke="#a9a7a5" stroke-width="1.8" stroke-dasharray="6.2 5.8"/><line x1="2926.0" y1="811.3" x2="2926.0" y2="861.8" stroke="#a9a7a5" stroke-width="1.8" stroke-dasharray="5.8 6.13"/></svg>
<svg class="abs" style="left:0;top:0" width="2969" height="1120" viewBox="0 0 2969 1120"><rect x="325.85" y="-28.75" width="44.30" height="112.20" rx="11.2" fill="#e4f1f8" stroke="#3a3632" stroke-width="1.7"/><rect x="341.90" y="-12.70" width="12.3" height="80.2" rx="6.15" fill="#245c63"/><path d="M411.75 -28.55 H813.90 A10.6 10.6 0 0 1 824.50 -17.95 V72.55 A10.6 10.6 0 0 1 813.90 83.15 H411.75 A10.6 10.6 0 0 1 401.15 72.55 V41.95 L386.15 27.25 L401.15 12.55 V-17.95 A10.6 10.6 0 0 1 411.75 -28.55 Z" fill="#fff" stroke="#8dbfd6" stroke-width="1.6" stroke-linejoin="miter"/><rect x="325.85" y="113.25" width="44.30" height="112.20" rx="11.2" fill="#e6eff0" stroke="#3a3632" stroke-width="1.7"/><rect x="341.90" y="129.30" width="12.3" height="80.2" rx="6.15" fill="#5fa2ba"/><path d="M411.75 113.45 H813.90 A10.6 10.6 0 0 1 824.50 124.05 V214.55 A10.6 10.6 0 0 1 813.90 225.15 H411.75 A10.6 10.6 0 0 1 401.15 214.55 V183.95 L386.15 169.25 L401.15 154.55 V124.05 A10.6 10.6 0 0 1 411.75 113.45 Z" fill="#fff" stroke="#a5c1c6" stroke-width="1.6" stroke-linejoin="miter"/><rect x="297.75" y="255.25" width="44.30" height="112.20" rx="11.2" fill="#e4f1f8" stroke="#3a3632" stroke-width="1.7"/><rect x="313.80" y="271.30" width="12.3" height="80.2" rx="6.15" fill="#245c63"/><path d="M383.65 255.45 H788.30 A10.6 10.6 0 0 1 798.90 266.05 V356.55 A10.6 10.6 0 0 1 788.30 367.15 H383.65 A10.6 10.6 0 0 1 373.05 356.55 V325.95 L358.05 311.25 L373.05 296.55 V266.05 A10.6 10.6 0 0 1 383.65 255.45 Z" fill="#fff" stroke="#8dbfd6" stroke-width="1.6" stroke-linejoin="miter"/><rect x="238.75" y="397.25" width="44.30" height="112.20" rx="11.2" fill="#e3f2e9" stroke="#3a3632" stroke-width="1.7"/><rect x="254.80" y="413.30" width="12.3" height="80.2" rx="6.15" fill="#2e7a45"/><path d="M324.65 397.45 H728.80 A10.6 10.6 0 0 1 739.40 408.05 V498.55 A10.6 10.6 0 0 1 728.80 509.15 H324.65 A10.6 10.6 0 0 1 314.05 498.55 V467.95 L299.05 453.25 L314.05 438.55 V408.05 A10.6 10.6 0 0 1 324.65 397.45 Z" fill="#fff" stroke="#9ccbab" stroke-width="1.6" stroke-linejoin="miter"/><rect x="179.25" y="539.25" width="44.30" height="112.20" rx="11.2" fill="#e4f1f8" stroke="#3a3632" stroke-width="1.7"/><rect x="195.30" y="555.30" width="12.3" height="80.2" rx="6.15" fill="#245c63"/><path d="M265.15 539.45 H668.00 A10.6 10.6 0 0 1 678.60 550.05 V640.55 A10.6 10.6 0 0 1 668.00 651.15 H265.15 A10.6 10.6 0 0 1 254.55 640.55 V609.95 L239.55 595.25 L254.55 580.55 V550.05 A10.6 10.6 0 0 1 265.15 539.45 Z" fill="#fff" stroke="#8dbfd6" stroke-width="1.6" stroke-linejoin="miter"/><rect x="179.25" y="681.25" width="44.30" height="112.20" rx="11.2" fill="#e3f2e9" stroke="#3a3632" stroke-width="1.7"/><rect x="195.30" y="697.30" width="12.3" height="80.2" rx="6.15" fill="#2e7a45"/><path d="M265.15 681.45 H668.00 A10.6 10.6 0 0 1 678.60 692.05 V782.55 A10.6 10.6 0 0 1 668.00 793.15 H265.15 A10.6 10.6 0 0 1 254.55 782.55 V751.95 L239.55 737.25 L254.55 722.55 V692.05 A10.6 10.6 0 0 1 265.15 681.45 Z" fill="#fff" stroke="#9ccbab" stroke-width="1.6" stroke-linejoin="miter"/><rect x="1393.45" y="-28.75" width="44.30" height="112.20" rx="11.2" fill="#fdecd9" stroke="#3a3632" stroke-width="1.7"/><rect x="1409.50" y="-12.70" width="12.3" height="80.2" rx="6.15" fill="#df7f12"/><path d="M1479.35 -28.55 H1878.00 A10.6 10.6 0 0 1 1888.60 -17.95 V72.55 A10.6 10.6 0 0 1 1878.00 83.15 H1479.35 A10.6 10.6 0 0 1 1468.75 72.55 V41.95 L1453.75 27.25 L1468.75 12.55 V-17.95 A10.6 10.6 0 0 1 1479.35 -28.55 Z" fill="#fff" stroke="#e9b66a" stroke-width="1.6" stroke-linejoin="miter"/><rect x="1393.15" y="113.25" width="44.30" height="112.20" rx="11.2" fill="#fdecd9" stroke="#3a3632" stroke-width="1.7"/><rect x="1409.20" y="129.30" width="12.3" height="80.2" rx="6.15" fill="#df7f12"/><path d="M1479.05 113.45 H1877.80 A10.6 10.6 0 0 1 1888.40 124.05 V214.55 A10.6 10.6 0 0 1 1877.80 225.15 H1479.05 A10.6 10.6 0 0 1 1468.45 214.55 V183.95 L1453.45 169.25 L1468.45 154.55 V124.05 A10.6 10.6 0 0 1 1479.05 113.45 Z" fill="#fff" stroke="#e9b66a" stroke-width="1.6" stroke-linejoin="miter"/><rect x="1392.95" y="255.25" width="44.30" height="112.20" rx="11.2" fill="#e6eff0" stroke="#3a3632" stroke-width="1.7"/><rect x="1409.00" y="271.30" width="12.3" height="80.2" rx="6.15" fill="#5fa2ba"/><path d="M1478.85 255.45 H1877.50 A10.6 10.6 0 0 1 1888.10 266.05 V356.55 A10.6 10.6 0 0 1 1877.50 367.15 H1478.85 A10.6 10.6 0 0 1 1468.25 356.55 V325.95 L1453.25 311.25 L1468.25 296.55 V266.05 A10.6 10.6 0 0 1 1478.85 255.45 Z" fill="#fff" stroke="#a5c1c6" stroke-width="1.6" stroke-linejoin="miter"/><rect x="1392.55" y="397.25" width="44.30" height="112.20" rx="11.2" fill="#e4f1f8" stroke="#3a3632" stroke-width="1.7"/><rect x="1408.60" y="413.30" width="12.3" height="80.2" rx="6.15" fill="#245c63"/><path d="M1478.45 397.45 H1877.00 A10.6 10.6 0 0 1 1887.60 408.05 V498.55 A10.6 10.6 0 0 1 1877.00 509.15 H1478.45 A10.6 10.6 0 0 1 1467.85 498.55 V467.95 L1452.85 453.25 L1467.85 438.55 V408.05 A10.6 10.6 0 0 1 1478.45 397.45 Z" fill="#fff" stroke="#8dbfd6" stroke-width="1.6" stroke-linejoin="miter"/><rect x="1392.55" y="539.25" width="44.30" height="112.20" rx="11.2" fill="#e4f1f8" stroke="#3a3632" stroke-width="1.7"/><rect x="1408.60" y="555.30" width="12.3" height="80.2" rx="6.15" fill="#245c63"/><path d="M1478.45 539.45 H1877.00 A10.6 10.6 0 0 1 1887.60 550.05 V640.55 A10.6 10.6 0 0 1 1877.00 651.15 H1478.45 A10.6 10.6 0 0 1 1467.85 640.55 V609.95 L1452.85 595.25 L1467.85 580.55 V550.05 A10.6 10.6 0 0 1 1478.45 539.45 Z" fill="#fff" stroke="#8dbfd6" stroke-width="1.6" stroke-linejoin="miter"/><rect x="1392.35" y="681.25" width="44.30" height="112.20" rx="11.2" fill="#e4f1f8" stroke="#3a3632" stroke-width="1.7"/><rect x="1408.40" y="697.30" width="12.3" height="80.2" rx="6.15" fill="#245c63"/><path d="M1478.25 681.45 H1876.80 A10.6 10.6 0 0 1 1887.40 692.05 V782.55 A10.6 10.6 0 0 1 1876.80 793.15 H1478.25 A10.6 10.6 0 0 1 1467.65 782.55 V751.95 L1452.65 737.25 L1467.65 722.55 V692.05 A10.6 10.6 0 0 1 1478.25 681.45 Z" fill="#fff" stroke="#8dbfd6" stroke-width="1.6" stroke-linejoin="miter"/></svg>
<span class="t" style="left:424.40px;top:-6.57px;font-size:28.2px;line-height:28.2px;font-weight:700;color:#161513;letter-spacing:-0.613px;">Supplier activities monitored</span>
<span class="t" style="left:423.12px;top:32.99px;font-size:28.6px;line-height:28.6px;color:#161513;letter-spacing:0.367px;-webkit-text-stroke:0.31px #161513;">Lynda Jones: 7/31/25 1:01…</span>
<span class="t" style="left:423.42px;top:135.43px;font-size:28.2px;line-height:28.2px;font-weight:700;color:#161513;letter-spacing:-0.920px;">Buyer PDF downloaded</span>
<span class="t" style="left:423.12px;top:174.99px;font-size:28.6px;line-height:28.6px;color:#161513;letter-spacing:0.367px;-webkit-text-stroke:0.31px #161513;">Lynda Jones: 7/31/25 1:01…</span>
<span class="t" style="left:396.30px;top:277.43px;font-size:28.2px;line-height:28.2px;font-weight:700;color:#161513;letter-spacing:-0.613px;">Supplier activities monitored</span>
<span class="t" style="left:395.02px;top:316.99px;font-size:28.6px;line-height:28.6px;color:#161513;letter-spacing:0.314px;-webkit-text-stroke:0.31px #161513;">Lynda Jones: 7/31/25 9:21 …</span>
<span class="t" style="left:336.32px;top:419.43px;font-size:28.2px;line-height:28.2px;font-weight:700;color:#161513;letter-spacing:-0.502px;">Negotiation published</span>
<span class="t" style="left:336.02px;top:458.99px;font-size:28.6px;line-height:28.6px;color:#161513;letter-spacing:0.326px;-webkit-text-stroke:0.31px #161513;">Lynda Jones: 7/31/25 1:34 …</span>
<span class="t" style="left:277.62px;top:561.43px;font-size:28.2px;line-height:28.2px;font-weight:700;color:#161513;letter-spacing:-0.296px;">Negotiation edited</span>
<span class="t" style="left:277.32px;top:600.99px;font-size:28.6px;line-height:28.6px;color:#161513;letter-spacing:0.359px;-webkit-text-stroke:0.31px #161513;">Lynda Jones: 7/30/25 5:48…</span>
<span class="t" style="left:277.62px;top:703.43px;font-size:28.2px;line-height:28.2px;font-weight:700;color:#161513;letter-spacing:-0.394px;">Draft created</span>
<span class="t" style="left:277.32px;top:742.99px;font-size:28.6px;line-height:28.6px;color:#161513;letter-spacing:0.359px;-webkit-text-stroke:0.31px #161513;">Lynda Jones: 7/30/25 5:48…</span>
<span class="t" style="left:1492.00px;top:-6.57px;font-size:28.2px;line-height:28.2px;font-weight:700;color:#161513;letter-spacing:-0.868px;">Supplier locked out</span>
<span class="t" style="left:1493.11px;top:32.99px;font-size:28.6px;line-height:28.6px;color:#161513;letter-spacing:0.388px;-webkit-text-stroke:0.31px #161513;">Alex Anders: 8/6/25 9:17 AM</span>
<span class="t" style="left:1491.70px;top:135.43px;font-size:28.2px;line-height:28.2px;font-weight:700;color:#161513;letter-spacing:-0.868px;">Supplier locked out</span>
<span class="t" style="left:1492.81px;top:174.99px;font-size:28.6px;line-height:28.6px;color:#161513;letter-spacing:0.388px;-webkit-text-stroke:0.31px #161513;">Alex Anders: 8/6/25 9:13 AM</span>
<span class="t" style="left:1491.50px;top:277.43px;font-size:28.2px;line-height:28.2px;font-weight:700;color:#161513;letter-spacing:-0.867px;">Supplier unlocked</span>
<span class="t" style="left:1492.61px;top:316.99px;font-size:28.6px;line-height:28.6px;color:#161513;letter-spacing:0.470px;-webkit-text-stroke:0.31px #161513;">Alex Anders: 8/6/25 9:11 AM</span>
<span class="t" style="left:1491.10px;top:419.43px;font-size:28.2px;line-height:28.2px;font-weight:700;color:#161513;letter-spacing:-0.613px;">Supplier activities monitored</span>
<span class="t" style="left:1492.21px;top:458.99px;font-size:28.6px;line-height:28.6px;color:#161513;letter-spacing:0.388px;-webkit-text-stroke:0.31px #161513;">Alex Anders: 8/6/25 9:07 AM</span>
<span class="t" style="left:1491.10px;top:561.43px;font-size:28.2px;line-height:28.2px;font-weight:700;color:#161513;letter-spacing:-0.613px;">Supplier activities monitored</span>
<span class="t" style="left:1492.21px;top:600.99px;font-size:28.6px;line-height:28.6px;color:#161513;letter-spacing:0.388px;-webkit-text-stroke:0.31px #161513;">Alex Anders: 8/6/25 9:07 AM</span>
<span class="t" style="left:1490.90px;top:703.43px;font-size:28.2px;line-height:28.2px;font-weight:700;color:#161513;letter-spacing:-0.613px;">Supplier activities monitored</span>
<span class="t" style="left:1492.01px;top:742.99px;font-size:28.6px;line-height:28.6px;color:#161513;letter-spacing:0.388px;-webkit-text-stroke:0.31px #161513;">Alex Anders: 8/6/25 9:06 AM</span>
<div class="abs" style="left:22.1px;top:22.1px;width:63.7px;height:63.7px;box-sizing:border-box;border:2px solid #827f7b;border-radius:50%;background:#fff;"></div>
<svg class="abs" style="left:41.9px;top:42.0px" width="24" height="24" viewBox="0 0 24 24"><path d="M12 2.4 V21.6 M2.4 12 H21.6" stroke="#161513" stroke-width="2.6" stroke-linecap="round" fill="none"/></svg>
<div class="abs" style="left:22.1px;top:102.1px;width:63.7px;height:63.7px;box-sizing:border-box;border:2px solid #9a9794;border-radius:50%;background:#fff;"></div>
<svg class="abs" style="left:41.9px;top:122.0px" width="24" height="24" viewBox="0 0 24 24"><path d="M2.4 12 H21.6" stroke="#a5a29e" stroke-width="2.4" fill="none"/></svg>
<span class="t" style="left:61.03px;top:822.50px;font-size:29.3px;line-height:29.3px;color:#161513;letter-spacing:2.291px;-webkit-text-stroke:0.32px #161513;">7/29</span>
<span class="t" style="left:243.80px;top:822.50px;font-size:29.3px;line-height:29.3px;color:#161513;letter-spacing:2.193px;-webkit-text-stroke:0.32px #161513;">7/30</span>
<span class="t" style="left:426.57px;top:822.50px;font-size:29.3px;line-height:29.3px;color:#161513;letter-spacing:2.291px;-webkit-text-stroke:0.32px #161513;">7/31</span>
<span class="t" style="left:609.63px;top:822.50px;font-size:29.3px;line-height:29.3px;color:#161513;letter-spacing:2.193px;-webkit-text-stroke:0.32px #161513;">8/01</span>
<span class="t" style="left:792.40px;top:822.50px;font-size:29.3px;line-height:29.3px;color:#161513;letter-spacing:2.242px;-webkit-text-stroke:0.32px #161513;">8/02</span>
<span class="t" style="left:975.17px;top:822.50px;font-size:29.3px;line-height:29.3px;color:#161513;letter-spacing:2.144px;-webkit-text-stroke:0.32px #161513;">8/03</span>
<span class="t" style="left:1157.94px;top:822.50px;font-size:29.3px;line-height:29.3px;color:#161513;letter-spacing:1.998px;-webkit-text-stroke:0.32px #161513;">8/04</span>
<span class="t" style="left:1340.71px;top:822.50px;font-size:29.3px;line-height:29.3px;color:#161513;letter-spacing:2.144px;-webkit-text-stroke:0.32px #161513;">8/05</span>
<span class="t" style="left:1523.48px;top:822.50px;font-size:29.3px;line-height:29.3px;color:#161513;letter-spacing:2.144px;-webkit-text-stroke:0.32px #161513;">8/06</span>
<span class="t" style="left:1706.25px;top:822.50px;font-size:29.3px;line-height:29.3px;color:#161513;letter-spacing:2.242px;-webkit-text-stroke:0.32px #161513;">8/07</span>
<span class="t" style="left:1889.02px;top:822.50px;font-size:29.3px;line-height:29.3px;color:#161513;letter-spacing:2.144px;-webkit-text-stroke:0.32px #161513;">8/08</span>
<span class="t" style="left:2071.79px;top:822.50px;font-size:29.3px;line-height:29.3px;color:#161513;letter-spacing:2.193px;-webkit-text-stroke:0.32px #161513;">8/09</span>
<span class="t" style="left:2254.56px;top:822.50px;font-size:29.3px;line-height:29.3px;color:#161513;letter-spacing:2.096px;-webkit-text-stroke:0.32px #161513;">8/10</span>
<span class="t" style="left:2437.33px;top:822.50px;font-size:29.3px;line-height:29.3px;color:#161513;letter-spacing:2.926px;-webkit-text-stroke:0.32px #161513;">8/11</span>
<span class="t" style="left:2620.10px;top:822.50px;font-size:29.3px;line-height:29.3px;color:#161513;letter-spacing:2.242px;-webkit-text-stroke:0.32px #161513;">8/12</span>
<span class="t" style="left:2802.87px;top:822.50px;font-size:29.3px;line-height:29.3px;color:#161513;letter-spacing:2.144px;-webkit-text-stroke:0.32px #161513;">8/13</span>
<span class="t" style="left:378.32px;top:876.51px;font-size:32px;line-height:32px;font-weight:700;color:#161513;letter-spacing:-1.453px;">July</span>
<div class="abs" style="left:2px;top:918.0px;width:2966px;height:200px;box-sizing:border-box;border:2px solid #1b1a18;background:#fff;"></div>
<svg class="abs" style="left:0;top:920.0px" width="2969" height="196" viewBox="0 1522 2969 196">
<line x1="367.2" y1="1523" x2="367.2" y2="1717" stroke="#b4d4df" stroke-width="1.6" stroke-dasharray="5.8 6.2"/>
<rect x="332.3" y="1535.8" width="24" height="8" rx="4" fill="#245c63"/>
<rect x="358.4" y="1535.8" width="24" height="8" rx="4" fill="#df7f12"/>
<rect x="331.1" y="1551.7" width="24" height="8" rx="4" fill="#245c63"/>
<rect x="358.4" y="1551.7" width="24" height="8" rx="4" fill="#245c63"/>
<rect x="330.3" y="1567.9" width="24" height="8" rx="4" fill="#245c63"/>
<rect x="356.5" y="1567.9" width="24" height="8" rx="4" fill="#2e7a45"/>
<rect x="329.5" y="1583.8" width="24" height="8" rx="4" fill="#245c63"/>
<rect x="354.1" y="1583.8" width="24" height="8" rx="4" fill="#2e7a45"/>
<rect x="327.1" y="1600.0" width="24" height="8" rx="4" fill="#245c63"/>
<rect x="353.7" y="1600.0" width="24" height="8" rx="4" fill="#2e7a45"/>
<rect x="325.9" y="1615.9" width="24" height="8" rx="4" fill="#5fa2ba"/>
<rect x="353.3" y="1615.9" width="24" height="8" rx="4" fill="#2e7a45"/>
<rect x="179.6" y="1632.1" width="24" height="8" rx="4" fill="#2e7a45"/>
<rect x="325.9" y="1632.1" width="24" height="8" rx="4" fill="#245c63"/>
<rect x="353.3" y="1632.1" width="24" height="8" rx="4" fill="#2e7a45"/>
<rect x="179.6" y="1648.0" width="24" height="8" rx="4" fill="#245c63"/>
<rect x="238.7" y="1648.0" width="24" height="8" rx="4" fill="#2e7a45"/>
<rect x="298.2" y="1648.0" width="24" height="8" rx="4" fill="#245c63"/>
<rect x="325.9" y="1648.0" width="24" height="8" rx="4" fill="#5fa2ba"/>
<rect x="349.7" y="1648.0" width="24" height="8" rx="4" fill="#245c63"/>
<rect x="1394.1" y="1567.9" width="24" height="8" rx="4" fill="#df7f12"/>
<rect x="1393.7" y="1583.8" width="24" height="8" rx="4" fill="#df7f12"/>
<rect x="1393.3" y="1600.0" width="24" height="8" rx="4" fill="#5fa2ba"/>
<rect x="1392.9" y="1615.9" width="24" height="8" rx="4" fill="#245c63"/>
<rect x="1392.9" y="1632.1" width="24" height="8" rx="4" fill="#245c63"/>
<rect x="1392.5" y="1648.0" width="24" height="8" rx="4" fill="#245c63"/>
<rect x="1832.3" y="1600.0" width="24" height="8" rx="4" fill="#245c63"/>
<rect x="1831.5" y="1615.9" width="24" height="8" rx="4" fill="#245c63"/>
<rect x="1831.1" y="1632.1" width="24" height="8" rx="4" fill="#245c63"/>
<rect x="1830.3" y="1648.0" width="24" height="8" rx="4" fill="#245c63"/>
<rect x="14.0" y="1612.4" width="2.8" height="15.6" fill="#161513"/><rect x="19.55" y="1612.4" width="2.8" height="15.6" fill="#161513"/>
<rect x="2947.95" y="1612.4" width="2.8" height="15.6" fill="#161513"/><rect x="2953.1" y="1612.4" width="2.8" height="15.6" fill="#161513"/>
</svg>
<span class="t" style="left:12.57px;top:1070.07px;font-size:28.5px;line-height:28.5px;font-weight:700;color:#161513;letter-spacing:-1.722px;">June</span>
<span class="t" style="left:378.07px;top:1070.07px;font-size:28.5px;line-height:28.5px;font-weight:700;color:#161513;letter-spacing:-1.977px;">July</span>
</main>
<div class="abs" style="left:2982px;top:604px;width:6px;height:861px;background:#efefef;"></div>
<div class="abs" style="left:2982px;top:1415px;width:6px;height:50px;background:#9c9c9c;"></div>
</div></body></html>
